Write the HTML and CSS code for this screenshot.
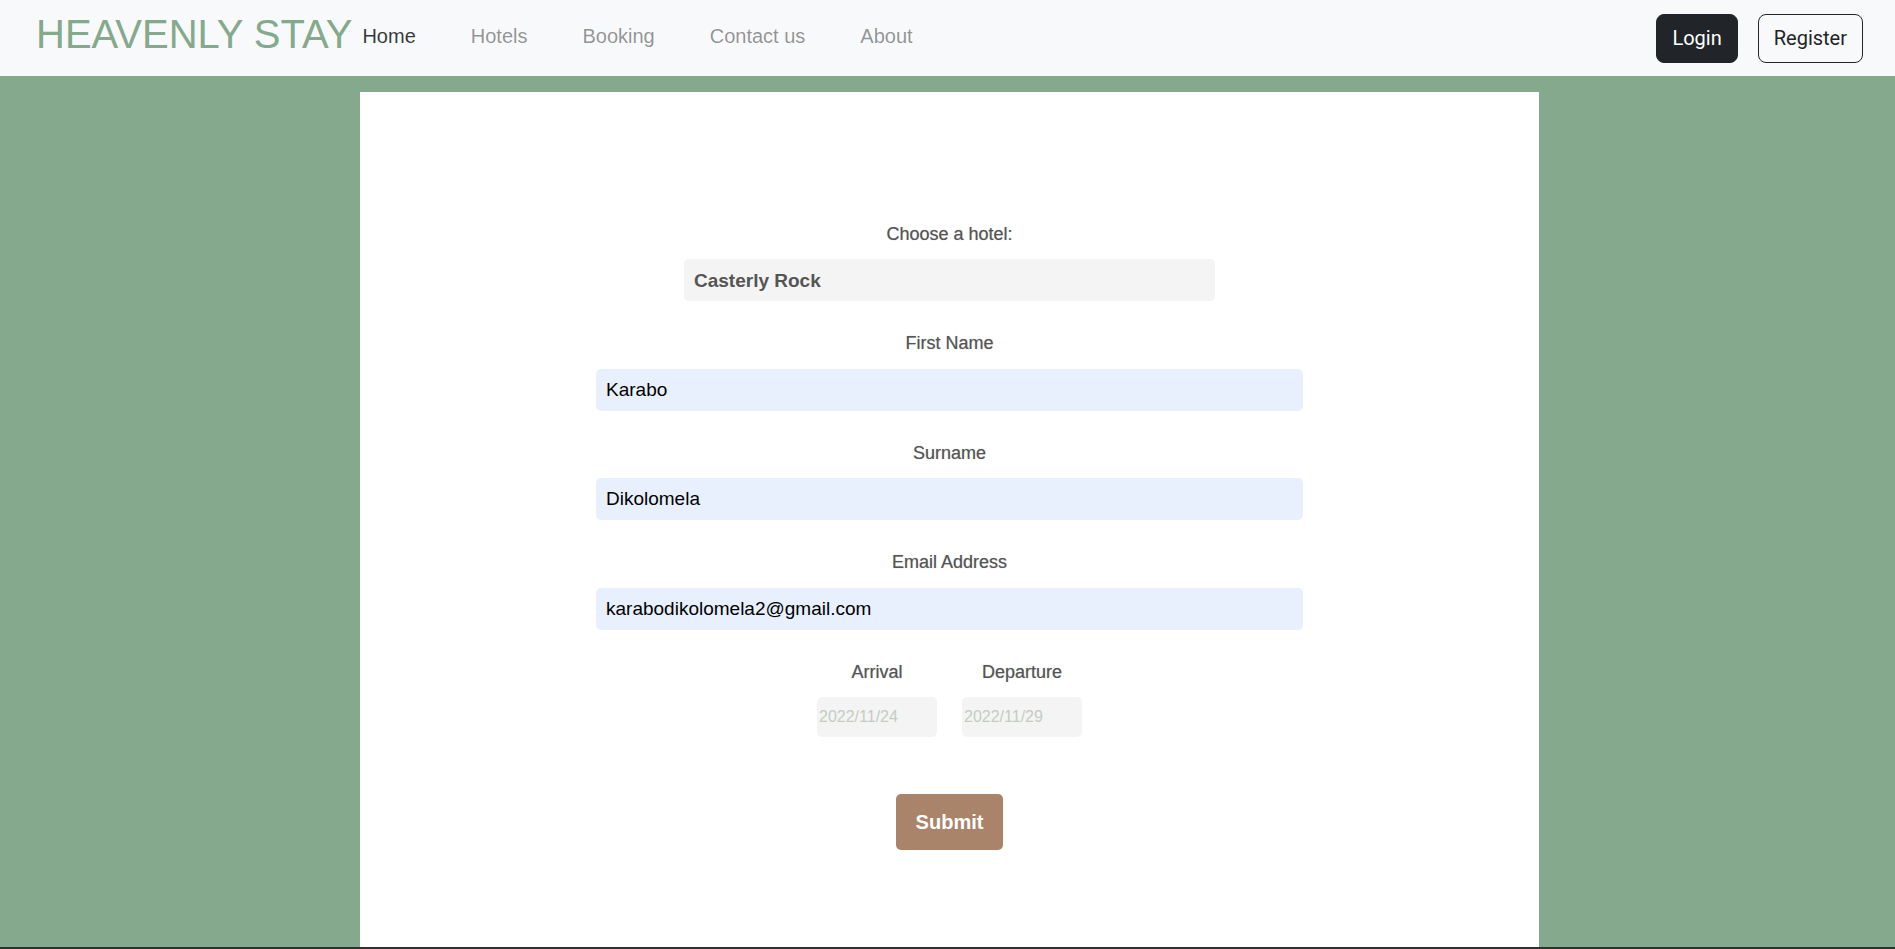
FILE: index.html
```html
<!DOCTYPE html>
<html lang="en">
<head>
<meta charset="utf-8">
<title>Heavenly Stay - Booking</title>
<link rel="stylesheet" href="styles.css">
</head>
<body>
<header class="navbar">
  <a class="brand" href="#">HEAVENLY STAY</a>
  <nav class="nav-links">
    <a class="nav-link active" href="#">Home</a>
    <a class="nav-link" href="#">Hotels</a>
    <a class="nav-link" href="#">Booking</a>
    <a class="nav-link" href="#">Contact us</a>
    <a class="nav-link" href="#">About</a>
  </nav>
  <div class="auth">
    <button class="btn btn-dark">Login</button>
    <button class="btn btn-outline">Register</button>
  </div>
</header>
<main class="card">
  <form class="booking-form">
    <div class="group">
      <label class="label" for="hotel">Choose a hotel:</label>
      <select class="hotel-select" id="hotel">
        <option>Casterly Rock</option>
      </select>
    </div>
    <div class="group">
      <label class="label" for="fname">First Name</label>
      <input class="text-input" id="fname" type="text" value="Karabo">
    </div>
    <div class="group">
      <label class="label" for="sname">Surname</label>
      <input class="text-input" id="sname" type="text" value="Dikolomela">
    </div>
    <div class="group">
      <label class="label" for="email">Email Address</label>
      <input class="text-input" id="email" type="text" value="karabodikolomela2@gmail.com">
    </div>
    <div class="dates">
      <div class="date-col">
        <label class="label" for="arrival">Arrival</label>
        <input class="date-input" id="arrival" type="text" placeholder="2022/11/24">
      </div>
      <div class="date-col">
        <label class="label" for="departure">Departure</label>
        <input class="date-input" id="departure" type="text" placeholder="2022/11/29">
      </div>
    </div>
    <button class="submit" type="button">Submit</button>
  </form>
</main>
<footer class="footer"></footer>
</body>
</html>
```
FILE: styles.css
```css
* { box-sizing: border-box; }

html, body {
  margin: 0;
  padding: 0;
}

body {
  background: #85a98c;
  font-family: "Liberation Sans", Arial, sans-serif;
}

.navbar {
  height: 76px;
  background: #f8f9fa;
  display: flex;
  align-items: center;
  padding: 0 32px 5px 36px;
}

.brand {
  font-size: 40px;
  color: #85a98c;
  text-decoration: none;
  margin-right: 10px;
  margin-bottom: 4px;
  line-height: 1;
}

.nav-links {
  display: flex;
  gap: 55px;
  align-items: center;
}

.nav-link {
  font-size: 20px;
  color: rgba(0, 0, 0, 0.42);
  text-decoration: none;
  line-height: 24px;
}

.nav-link.active {
  color: rgba(0, 0, 0, 0.78);
}

.auth {
  margin-left: auto;
  display: flex;
  gap: 20px;
  margin-top: 5px;
}

.btn {
  font-family: Roboto, "Liberation Sans", sans-serif;
  font-size: 20px;
  height: 49px;
  padding: 0 15px;
  border-radius: 8px;
  border: 1px solid #212529;
  cursor: pointer;
}

.btn-dark {
  background: #212529;
  color: #fff;
}

.btn-outline {
  background: transparent;
  color: #212529;
}

.card {
  width: 1179px;
  height: 855px;
  margin: 16px auto 0;
  position: relative;
  left: 2px;
  background: #fff;
  padding-top: 131.5px;
}

.booking-form {
  display: flex;
  flex-direction: column;
  align-items: center;
}

.group {
  display: flex;
  flex-direction: column;
  align-items: center;
  margin-bottom: 32px;
}

.label {
  font-size: 18px;
  line-height: 21px;
  color: #555;
  text-shadow: 0 0 1px rgba(0, 0, 0, 0.35);
  margin-bottom: 14.5px;
}

.hotel-select {
  appearance: none;
  -webkit-appearance: none;
  width: 531px;
  height: 42px;
  border: none;
  border-radius: 5px;
  background: #f4f4f4;
  padding: 0 10px;
  font-family: "Liberation Sans", Arial, sans-serif;
  font-size: 19px;
  font-weight: bold;
  color: #555;
}

.text-input {
  width: 707px;
  height: 42px;
  border: none;
  border-radius: 5px;
  background: #e8f0fe;
  padding: 0 10px;
  font-family: "Liberation Sans", Arial, sans-serif;
  font-size: 19px;
  color: #000;
}

.dates {
  display: flex;
  gap: 25px;
}

.date-col {
  display: flex;
  flex-direction: column;
  align-items: center;
}

.date-input {
  width: 120px;
  height: 40px;
  border: none;
  border-radius: 5px;
  background: #f4f4f4;
  padding: 0 2px;
  font-family: "Liberation Sans", Arial, sans-serif;
  font-size: 16px;
  color: #333;
}

.date-input::placeholder {
  color: #c4ccc2;
}

.submit {
  margin-top: 57px;
  height: 56px;
  padding: 0 20px;
  border: none;
  border-radius: 5px;
  background: #a9846a;
  color: #fff;
  font-family: "Liberation Sans", Arial, sans-serif;
  font-size: 20px;
  font-weight: bold;
  cursor: pointer;
}

.footer {
  height: 120px;
  background: #2f2f2f;
}
```
